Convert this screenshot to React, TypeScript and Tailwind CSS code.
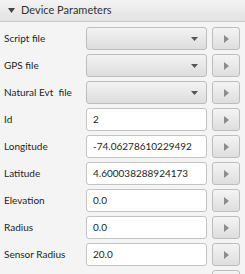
import React from 'react'

type Row = {
  label: string
  kind: 'combo' | 'text' | 'blank'
  value?: string
}

const rows: Row[] = [
  { label: 'Script file', kind: 'combo' },
  { label: 'GPS file', kind: 'combo' },
  { label: 'Natural Evt  file', kind: 'combo' },
  { label: 'Id', kind: 'text', value: '2' },
  { label: 'Longitude', kind: 'text', value: '-74.06278610229492' },
  { label: 'Latitude', kind: 'text', value: '4.600038288924173' },
  { label: 'Elevation', kind: 'text', value: '0.0' },
  { label: 'Radius', kind: 'text', value: '0.0' },
  { label: 'Sensor Radius', kind: 'text', value: '20.0' },
  { label: '', kind: 'blank' },
]

const RunButton = () => (
  <button className="ml-[5px] flex h-[23px] w-[28px] shrink-0 items-center justify-center rounded-[3px] border border-[#bdbdbd] bg-gradient-to-b from-[#f4f4f4] to-[#dedede]">
    <svg width="5" height="8" viewBox="0 0 5 8">
      <path d="M0 0 L5 4 L0 8 Z" fill="#8c8c8c" />
    </svg>
  </button>
)

export default function App() {
  return (
    <div
      className="h-[274px] w-[245px] overflow-hidden bg-[#f4f4f4] text-[#1e1e1e]"
      style={{ fontFamily: 'Lato, "Liberation Sans", sans-serif' }}
    >
      {/* Section header */}
      <div className="flex h-[22px] items-center gap-[6px] border-b border-[#c9c9c9] bg-gradient-to-b from-[#f3f3f3] to-[#e2e2e2] pl-[8px] text-[11px] text-[#333]">
        <svg width="7" height="5" viewBox="0 0 7 5">
          <path d="M0 0 L7 0 L3.5 5 Z" fill="#444" />
        </svg>
        <span>Device Parameters</span>
      </div>

      {/* Parameter rows */}
      <div className="flex flex-col gap-[4px] pt-[5px]">
        {rows.map((row, i) => (
          <div key={i} className="flex h-[23px] items-center">
            <span className="w-[86px] shrink-0 whitespace-pre pl-[4px] text-[10px]">{row.label}</span>
            {row.kind === 'combo' && (
              <div className="flex h-[23px] w-[121px] items-center justify-end rounded-[3px] border border-[#bdbdbd] bg-gradient-to-b from-[#f3f3f3] to-[#dddddd] pr-[8px]">
                <svg width="7" height="4" viewBox="0 0 7 4">
                  <path d="M0 0 L7 0 L3.5 4 Z" fill="#555" />
                </svg>
              </div>
            )}
            {row.kind === 'text' && (
              <div className="flex h-[23px] w-[121px] items-center rounded-[3px] border border-[#c3c3c3] bg-white pl-[6px] text-[10px]">
                {row.value}
              </div>
            )}
            {row.kind === 'blank' && <div className="w-[121px]" />}
            <RunButton />
          </div>
        ))}
      </div>
    </div>
  )
}
